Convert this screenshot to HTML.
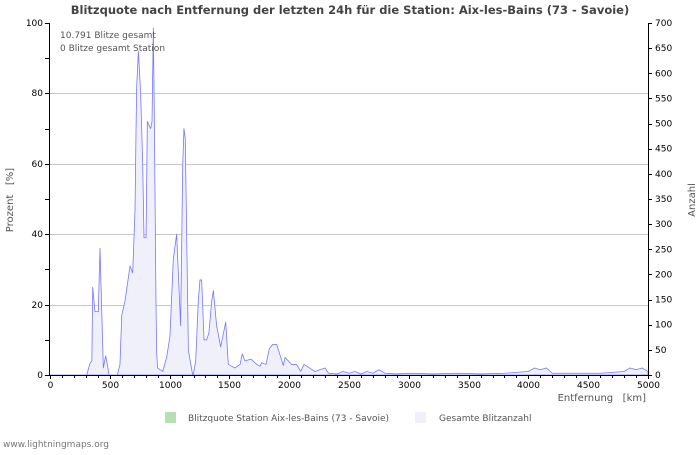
<!DOCTYPE html>
<html><head><meta charset="utf-8"><style>
body{margin:0;background:#fff;width:700px;height:450px;overflow:hidden}
svg{font-family:"DejaVu Sans","Liberation Sans",sans-serif}
</style></head><body>
<svg width="700" height="450" xmlns="http://www.w3.org/2000/svg">
<text x="350" y="14" text-anchor="middle" font-size="11.5" font-weight="bold" fill="#444">Blitzquote nach Entfernung der letzten 24h für die Station: Aix-les-Bains (73 - Savoie)</text>
<g stroke="#c8c8c8" stroke-width="1">
<line x1="50" y1="93.5" x2="648" y2="93.5"/><line x1="50" y1="164.5" x2="648" y2="164.5"/><line x1="50" y1="234.5" x2="648" y2="234.5"/><line x1="50" y1="305.5" x2="648" y2="305.5"/>
</g>
<g transform="translate(50,375) scale(0.1196,-3.52)">
<polygon fill="#f0f0fb" stroke="#7777ff" stroke-width="0.8" vector-effect="non-scaling-stroke" stroke-linejoin="round" points="0,0 307,0 334,3.3 350,4 357,25 365,22 376,18 404,18 418,36 432,19 446,2 465,5.4 480,3 493,0 563,0 585,3 600,17 627,21 669,31 691,29 697,34 711,47 719,69 725,82 739,92 758,80 775,60 786,39 803,39 814,72 842,70 853,72 864,98.6 872,74 886,21 892,6 900,2 942,1 975,5 1003,11 1031,33 1059,40 1087,18 1092,14 1110,60 1120,70 1131,67 1157,7 1193,0 1198,0 1218,4 1240,21 1254,27 1268,27 1288,10 1310,10 1329,12 1352,21 1366,24 1393,14 1427,8 1469,15 1491,3 1547,2 1589,3 1608,6 1630,4 1680,4.5 1730,3 1756,2.5 1770,3.5 1806,3 1834,7.5 1862,8.7 1895,8.7 1951,2.7 1965,5 2020,3 2062,3 2096,1 2124,3 2170,2 2215,1 2299,2 2330,0.5 2400,0.3 2450,1 2500,0.5 2550,1 2600,0.3 2650,1 2700,0.5 2750,1.5 2800,0.5 2900,0.3 3000,0.5 3200,0.3 3400,0.5 3600,0.3 3800,0.5 4000,1 4050,2 4100,1.5 4150,2 4200,0.5 4400,0.5 4600,0.5 4800,1 4850,2 4900,1.5 4950,2 5000,1 5000,0"/>
</g>
<g stroke="#000" stroke-width="1">
<line x1="49.5" y1="23" x2="49.5" y2="375"/><line x1="648.5" y1="23" x2="648.5" y2="375"/><line x1="49" y1="375.5" x2="649" y2="375.5"/>
</g>
<g stroke="#000" stroke-width="1" id="lt"></g>
<g font-size="9" fill="#000" text-anchor="end">
<text x="43" y="26">100</text><text x="43" y="96">80</text><text x="43" y="167">60</text><text x="43" y="237">40</text><text x="43" y="308">20</text><text x="43" y="378">0</text>
</g>
<g font-size="9" fill="#000" text-anchor="start" id="rl"></g>
<g font-size="9" fill="#000" text-anchor="middle" id="bl"></g>
<text x="60" y="38" font-size="9" fill="#555">10.791 Blitze gesamt</text>
<text x="60" y="51" font-size="9" fill="#555">0 Blitze gesamt Station</text>
<text x="646" y="401" font-size="10" fill="#555" text-anchor="end" xml:space="preserve">Entfernung   [km]</text>
<text transform="translate(13,200) rotate(-90)" font-size="10" fill="#555" text-anchor="middle" xml:space="preserve">Prozent   [%]</text>
<text transform="translate(695,200) rotate(-90)" font-size="10" fill="#555" text-anchor="middle">Anzahl</text>
<rect x="165" y="412" width="11" height="11" fill="#b5e0b5"/>
<text x="188" y="421" font-size="9" fill="#555">Blitzquote Station Aix-les-Bains (73 - Savoie)</text>
<rect x="415" y="412" width="11" height="11" fill="#f0f0fb"/>
<text x="439" y="421" font-size="9" fill="#555">Gesamte Blitzanzahl</text>
<text x="3" y="447" font-size="9" fill="#777">www.lightningmaps.org</text>
</svg>
<script>
var ns="http://www.w3.org/2000/svg";
function el(p,t,a,txt){var e=document.createElementNS(ns,t);for(var k in a)e.setAttribute(k,a[k]);if(txt!=null)e.textContent=txt;p.appendChild(e);}
var lt=document.getElementById('lt'),rl=document.getElementById('rl'),bl=document.getElementById('bl');
for(var i=0;i<=10;i++){var y=Math.round(375-i*35.2)+0.5;el(lt,'line',{x1:45,y1:y,x2:50,y2:y});}
for(var i=0;i<=14;i++){var y=375-i*25.14;el(lt,'line',{x1:648,y1:Math.round(y)+0.5,x2:652,y2:Math.round(y)+0.5});el(rl,'text',{x:655,y:y+3},String(i*50));}
for(var i=0;i<=50;i++){var x=Math.round(50+i*11.96)+0.5;el(lt,'line',{x1:x,y1:375,x2:x,y2:i%5==0?379:378});if(i%5==0)el(bl,'text',{x:x,y:388},String(i*100));}
</script>
</body></html>
